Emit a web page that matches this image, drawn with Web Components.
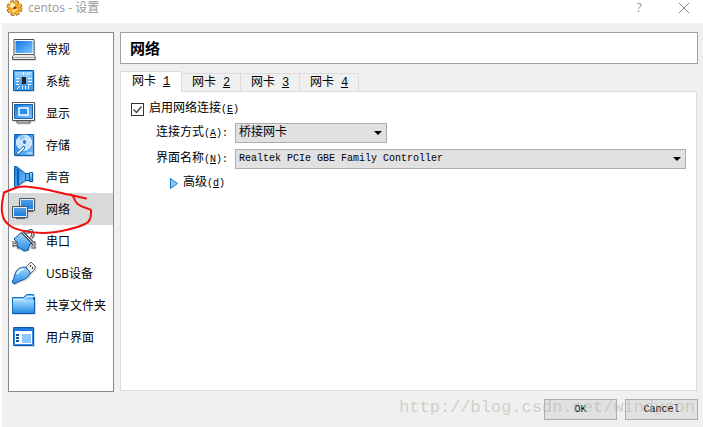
<!DOCTYPE html>
<html lang="zh-CN">
<head>
<meta charset="utf-8">
<title>centos - 设置</title>
<style>
html { background: #fff; }
body {
  margin: 0;
  font: 12px/16px "Liberation Mono", "Noto Sans CJK SC", monospace;
  color: #000;
  --ui: "Open Sans", "Noto Sans CJK SC", sans-serif;
  --edge: #dcdcdc;
  --control: #e1e1e1;
  --control-edge: #adadad;
}
</style>
</head>
<body>
<settings-window heading="centos - 设置">
  <nav-list slot="nav">
    <nav-item icon="general">常规</nav-item>
    <nav-item icon="system">系统</nav-item>
    <nav-item icon="display">显示</nav-item>
    <nav-item icon="storage">存储</nav-item>
    <nav-item icon="sound">声音</nav-item>
    <nav-item icon="network" selected>网络</nav-item>
    <nav-item icon="serial">串口</nav-item>
    <nav-item icon="usb">USB设备</nav-item>
    <nav-item icon="folder">共享文件夹</nav-item>
    <nav-item icon="ui">用户界面</nav-item>
  </nav-list>
  <page-title>网络</page-title>
  <tab-panel>
    <tab-button slot="tab" name="网卡" key="1" selected></tab-button>
    <tab-button slot="tab" name="网卡" key="2"></tab-button>
    <tab-button slot="tab" name="网卡" key="3"></tab-button>
    <tab-button slot="tab" name="网卡" key="4"></tab-button>
    <check-field name="启用网络连接" key="E"></check-field>
    <select-field name="连接方式" key="A" value="桥接网卡" compact></select-field>
    <select-field name="界面名称" key="N" value="Realtek PCIe GBE Family Controller"></select-field>
    <expand-field name="高级" key="d"></expand-field>
  </tab-panel>
  <push-button slot="actions">OK</push-button>
  <push-button slot="actions">Cancel</push-button>
</settings-window>
<red-marker></red-marker>
<water-mark>http://blog.csdn.net/windycon</water-mark>

<script>
const define = (name, render) => customElements.define(name, class extends HTMLElement {
  connectedCallback() {
    if (this.shadowRoot) return;
    const template = document.createElement('template');
    template.innerHTML = render(this);
    this.attachShadow({ mode: 'open' }).append(template.content.cloneNode(true));
  }
});
const attr = (el, name) => el.getAttribute(name) || '';
const latin = 'small { font: 10px/1 "Liberation Mono", monospace; }';

const defs = `<defs>
  <linearGradient id="b" x1="0" y1="0" x2="1" y2="1"><stop stop-color="#1478e0"/><stop offset="1" stop-color="#7cc4ff"/></linearGradient>
  <linearGradient id="l" x1="0" y1="0" x2="0" y2="1"><stop stop-color="#a8dcff"/><stop offset="1" stop-color="#258be6"/></linearGradient>
</defs>`;
const icons = {
  general: `<path d="M2 2.5h20v15H2z" fill="#fff" stroke="#4c4c4c"/><path d="M3.500 4h17v12h-17z" fill="url(#b)"/><path d="M2.500 17.500h19l1.500 2v3H.5v-3z" fill="#ededed" stroke="#555"/><path d="M1 20.500h22" stroke="#aaa"/>`,
  system: `<path d="M1.500 1.500h20v20h-20z" fill="url(#l)" stroke="#0d57a8"/><path d="M2.500 2.500h18v18h-18z" fill="none" stroke="#43a5f5"/><path d="M9 8h5v7H9z" fill="#222"/><path d="M9.500 8v7" stroke="#888"/><path d="M11.500 3v3M14.500 6l4-3M4 9.500h3M4 12.500h3M4 15.500h3M16 9.500h4M16 12.500h4M16 15.500h3M5 20l3-3M10.500 17v3M13.500 17v3M16.500 17v3" stroke="#fff"/>`,
  display: `<path d="M.5 1.500h22v18H.5z" fill="#fff" stroke="#555"/><path d="M2.500 3.500h18v14h-18z" fill="url(#b)" stroke="#155fae"/><path d="M7 7h9v7H7z" fill="#2a8dec" stroke="#fff" stroke-width="1.500"/><path d="M5 20h13v2H5z" fill="#eee" stroke="#555"/>`,
  storage: `<path d="M2.500 1.500h19v21h-19z" fill="url(#b)" stroke="#0e5eb2"/><circle cx="12" cy="9.500" r="7.500" fill="#c8e5fb" stroke="#f8fcff"/><path d="M12 9.500 6 4a8 8 0 0 1 7-2z" fill="#8ec9f7"/><circle cx="12.500" cy="9" r="2.500" fill="#2283dd" stroke="#fff"/><path d="M4 20 12 13l1 2-6 6H4z" fill="#fff" stroke="#1768b8"/><path d="M15 20h5" stroke="#d5efff"/>`,
  sound: `<path d="M2.500 1.500h2l9 7v7l-9 6h-2z" fill="url(#b)" stroke="#105ba6"/><path d="M13.500 8.500h4v7h-4z" fill="#58abf0" stroke="#105ba6"/><path d="M17.500 7.500h3v9h-3z" fill="url(#l)" stroke="#105ba6"/><path d="M6 4v16" stroke="#0c5cae" stroke-width="2"/>`,
  network: `<path d="M7.500 1.500h15v12h-15z" fill="#d4ecff" stroke="#555"/><path d="M9 3h12v9H9z" fill="url(#l)"/><path d="M9 3h12v9H9z" fill="#1474d8" fill-opacity=".6"/><path d="M13 14.500h8" stroke="#666"/><path d="M.5 9.500h15v11H.5z" fill="#d4ecff" stroke="#555"/><path d="M2 11h12v8H2z" fill="url(#l)"/><path d="M2 11h12v8H2z" fill="#1474d8" fill-opacity=".6"/><path d="M4 21.500h9" stroke="#666"/>`,
  serial: `<path d="M2 12v4l3-1 2 5M12 3h4l3-2 2 5-2 3M19 14h3v4h-3" fill="none" stroke="#555" stroke-width="3"/><path d="M2 12v4l3-1 2 5M12 3h4l3-2 2 5-2 3M19 14h3v4h-3" fill="none" stroke="#eee"/><path d="m2 10 8-7 11 11-3 1-2 6-4 1-6-4-1-5z" fill="url(#l)" stroke="#0e5698"/><path d="m10 3 11 11" stroke="#444" stroke-width="3"/><path d="m10 3 11 11" stroke="#eee"/>`,
  usb: `<path d="m14 6 5-5 4 4v3l-5 5z" fill="#eee" stroke="#666"/><path d="M18 5h1M20 7h1" stroke="#333" stroke-width="2"/><path d="M13 6q-8 0-10 7-1 5-3 8l2 2 6-3q10-3 10-9z" fill="url(#l)" stroke="#0e5ba8"/><path d="M5 13q2-4 7-5" fill="none" stroke="#e6f7ff" stroke-width="2"/>`,
  folder: `<path d="M.5 20.500v-16h11l3-3h7v19z" fill="#74c0f8" stroke="#1672c0"/><path d="M1 7h21v13H1z" fill="url(#l)"/><path d="M1 6.500h11l3-3h7" fill="none" stroke="#d6f1ff"/><path d="M.5 20.500h22V4" fill="none" stroke="#0b5ba9"/>`,
  ui: `<path d="M1.500 2.500h20v18h-20z" fill="#fff" stroke="#0959b3"/><path d="M2.500 3.500h18v16h-18z" fill="none" stroke="#2c91ec"/><path d="M2 3h19v3H2z" fill="#1d7bdd"/><path d="M4 9h3v2H4zM4 12h3v2H4zM4 15h3v2H4z" fill="#0d57a8"/><path d="M10 9h9v9h-9z" fill="#8fc6ff"/>`
};

define('nav-item', el => `<style>
  :host { display: block; }
  button { display: flex; align-items: center; gap: 10px; width: 100%; height: 32px; padding: 0 3px; border: 0; background: none; font: 12px/16px var(--ui); color: #000; white-space: nowrap; text-align: left; }
  :host([selected]) button { background: #d9d9d9; }
  svg { flex: none; width: 24px; height: 24px; filter: drop-shadow(1px 1px 0 #bbb8); }
  span { padding-top: 2px; }
</style><button type="button"><svg viewBox="0 0 24 24" aria-hidden="true">${defs}${icons[attr(el, 'icon')]}</svg><span><slot></slot></span></button>`);

define('nav-list', () => `<style>
  :host { display: block; box-sizing: border-box; height: 100%; border: 1px solid #828790; background: #fff; }
</style><nav><slot></slot></nav>`);

define('page-title', () => `<style>
  :host { display: block; border: 1px solid #a0a0a0; background: #fff; padding: 7px 9px; }
  h1 { margin: 0; font: bold 15px/16px "Noto Sans CJK SC", sans-serif; }
</style><h1><slot></slot></h1>`);

define('tab-button', el => `<style>
  :host { display: block; }
  ${latin}
  button { box-sizing: border-box; width: 59px; height: 18px; padding: 0; border: 1px solid var(--edge); border-left: 0; border-bottom: 0; background: #f0f0f0; font: inherit; color: #000; }
  :host([selected]) button { width: 62px; height: 21px; margin-bottom: -1px; border-left: 1px solid var(--edge); background: #fff; position: relative; }
  small { font-size: 12px; margin-left: 7px; }
</style><button type="button" role="tab" aria-selected="${el.hasAttribute('selected')}">${attr(el, 'name')}<small><u>${attr(el, 'key')}</u></small></button>`);

define('tab-panel', () => `<style>
  :host { display: flex; flex-direction: column; }
  .tabs { display: flex; align-items: flex-end; }
  .pane { flex: 1; margin-right: 1px; padding: 9px 10px; border: 1px solid var(--edge); background: #fff; }
</style><div class="tabs" role="tablist"><slot name="tab"></slot></div><div class="pane" role="tabpanel"><slot></slot></div>`);

define('check-field', el => `<style>
  :host { display: block; height: 16px; margin-bottom: 6px; }
  ${latin}
  label { display: flex; align-items: center; gap: 5px; height: 16px; }
  .box { display: grid; }
  .box > * { grid-area: 1 / 1; }
  input { appearance: none; width: 13px; height: 13px; margin: 0; border: 1px solid #333; background: #fff; }
  svg { width: 13px; height: 13px; pointer-events: none; visibility: hidden; }
  input:checked + svg { visibility: visible; }
</style><label><span class="box"><input type="checkbox" checked><svg viewBox="0 0 13 13"><path d="m2.500 6.500 3 3 5-6" fill="none" stroke="#444" stroke-width="1.400"/></svg></span><span>${attr(el, 'name')}<small>(<u>${attr(el, 'key')}</u>)</small></span></label>`);

define('select-field', el => `<style>
  :host { display: flex; align-items: center; gap: 7px; margin: 0 0 6px 25px; }
  ${latin}
  label { flex: none; width: 72px; white-space: nowrap; }
  .box { display: grid; flex: 1; align-items: center; }
  :host([compact]) .box { flex: 0 0 152px; }
  .box > * { grid-area: 1 / 1; }
  select { appearance: none; box-sizing: border-box; width: 100%; height: 20px; margin: 0; padding: 0 20px 0 3px; border: 1px solid var(--control-edge); border-radius: 0; background: var(--control); color: #000; font: 10px/16px "Liberation Mono", "Noto Sans CJK SC", monospace; }
  :host([compact]) select { font-size: 12px; }
  svg { justify-self: end; width: 8px; height: 4px; margin-right: 5px; pointer-events: none; }
</style><label for="s">${attr(el, 'name')}<small>(<u>${attr(el, 'key')}</u>):</small></label>
<div class="box"><select id="s"><option>${attr(el, 'value')}</option></select><svg viewBox="0 0 8 4"><path d="M0 0h8L4 4z"/></svg></div>`);

define('expand-field', el => `<style>
  :host { display: block; margin: 0 0 0 39px; }
  ${latin}
  button { display: flex; align-items: center; gap: 5px; padding: 0; border: 0; background: none; font: inherit; color: #000; }
  svg { width: 8px; height: 11px; }
</style><button type="button" aria-expanded="false"><svg viewBox="0 0 8 11"><path d="M.5.5 7.500 5.500.5 10.500z" fill="#8cc8f5" stroke="#1477c8"/></svg><span>${attr(el, 'name')}<small>(<u>${attr(el, 'key')}</u>)</small></span></button>`);

define('push-button', () => `<style>
  :host { display: block; }
  button { box-sizing: border-box; width: 73px; height: 21px; padding: 0; border: 1px solid var(--control-edge); background: var(--control); font: 10px/16px "Liberation Mono", monospace; color: #000; }
</style><button type="button"><slot></slot></button>`);

define('settings-window', el => `<style>
  :host { display: flex; flex-direction: column; min-height: 100vh; }
  header { display: flex; align-items: center; height: 23px; padding: 0 12px 7px 6px; box-sizing: border-box; font: 12px/16px var(--ui); color: #999; }
  header span { flex: 1; margin-left: 5px; }
  header svg { width: 17px; height: 17px; }
  header button { display: grid; place-items: center; width: 14px; height: 16px; margin-left: 31px; padding: 0; border: 0; background: none; font: 12px/16px var(--ui); color: #999; }
  header button svg { width: 12px; height: 12px; }
  .body { flex: 1; display: grid; grid-template: 1fr auto / 106px minmax(0, 1fr); column-gap: 6px; row-gap: 7px; margin-left: 2px; padding: 9px 5px 7px 6px; background: #f0f0f0; }
  main { display: flex; flex-direction: column; gap: 7px; }
  ::slotted(tab-panel) { flex: 1; margin-bottom: 1px; }
  footer { grid-column: 1 / 3; display: flex; justify-content: flex-end; gap: 8px; }
</style>
<header><svg viewBox="0 0 17 17" aria-hidden="true"><circle cx="8.500" cy="8" r="6" fill="none" stroke="#8a5a1c" stroke-width="4" stroke-dasharray="3.300 1.400"/><circle cx="8.500" cy="8" r="6" fill="#f5a623" stroke="#c07a1a"/><circle cx="8.500" cy="8" r="5.800" fill="none" stroke="#f9b23b" stroke-width="3" stroke-dasharray="2.600 1.950"/><circle cx="6.500" cy="5.500" r="2.500" fill="#fff0b8"/><path d="m7 8 2-2 2 2-2 2z" fill="#704b1b"/><path d="m6 12 5-3" stroke="#ffe8a0" stroke-width="1.500"/></svg><span>${attr(el, 'heading')}</span>
<button type="button" aria-label="Help">?</button><button type="button" aria-label="Close"><svg viewBox="0 0 12 12"><path d="m1 1 10 10M11 1 1 11" stroke="#888"/></svg></button></header>
<div class="body"><slot name="nav"></slot><main><slot></slot></main><footer><slot name="actions"></slot></footer></div>`);

define('red-marker', () => `<style>
  :host { position: absolute; left: 0; top: 180px; pointer-events: none; }
  svg { display: block; width: 100px; height: 60px; }
</style><svg viewBox="0 0 100 60"><path d="M86 18.500 71 15C59 13 45 8 28 6.700 22 6 17 7 14 8.500L4 12.500C3 18 1 25 2 32 3 38 4 41 9 45 15 50 30 53 43 53 58 53 76 48 85 44 90 42 91 37 91 33V30C86 27 80 28 76 22 74 20 75 17 71 14.500" fill="none" stroke="#f00f0f" stroke-width="2" stroke-linecap="round" stroke-linejoin="round"/></svg>`);

define('water-mark', () => `<style>
  :host { position: absolute; right: 8px; bottom: 7px; font: 17px/24px "Liberation Mono", monospace; color: #b8b8ac99; pointer-events: none; }
</style><slot></slot>`);
</script>
</body>
</html>
